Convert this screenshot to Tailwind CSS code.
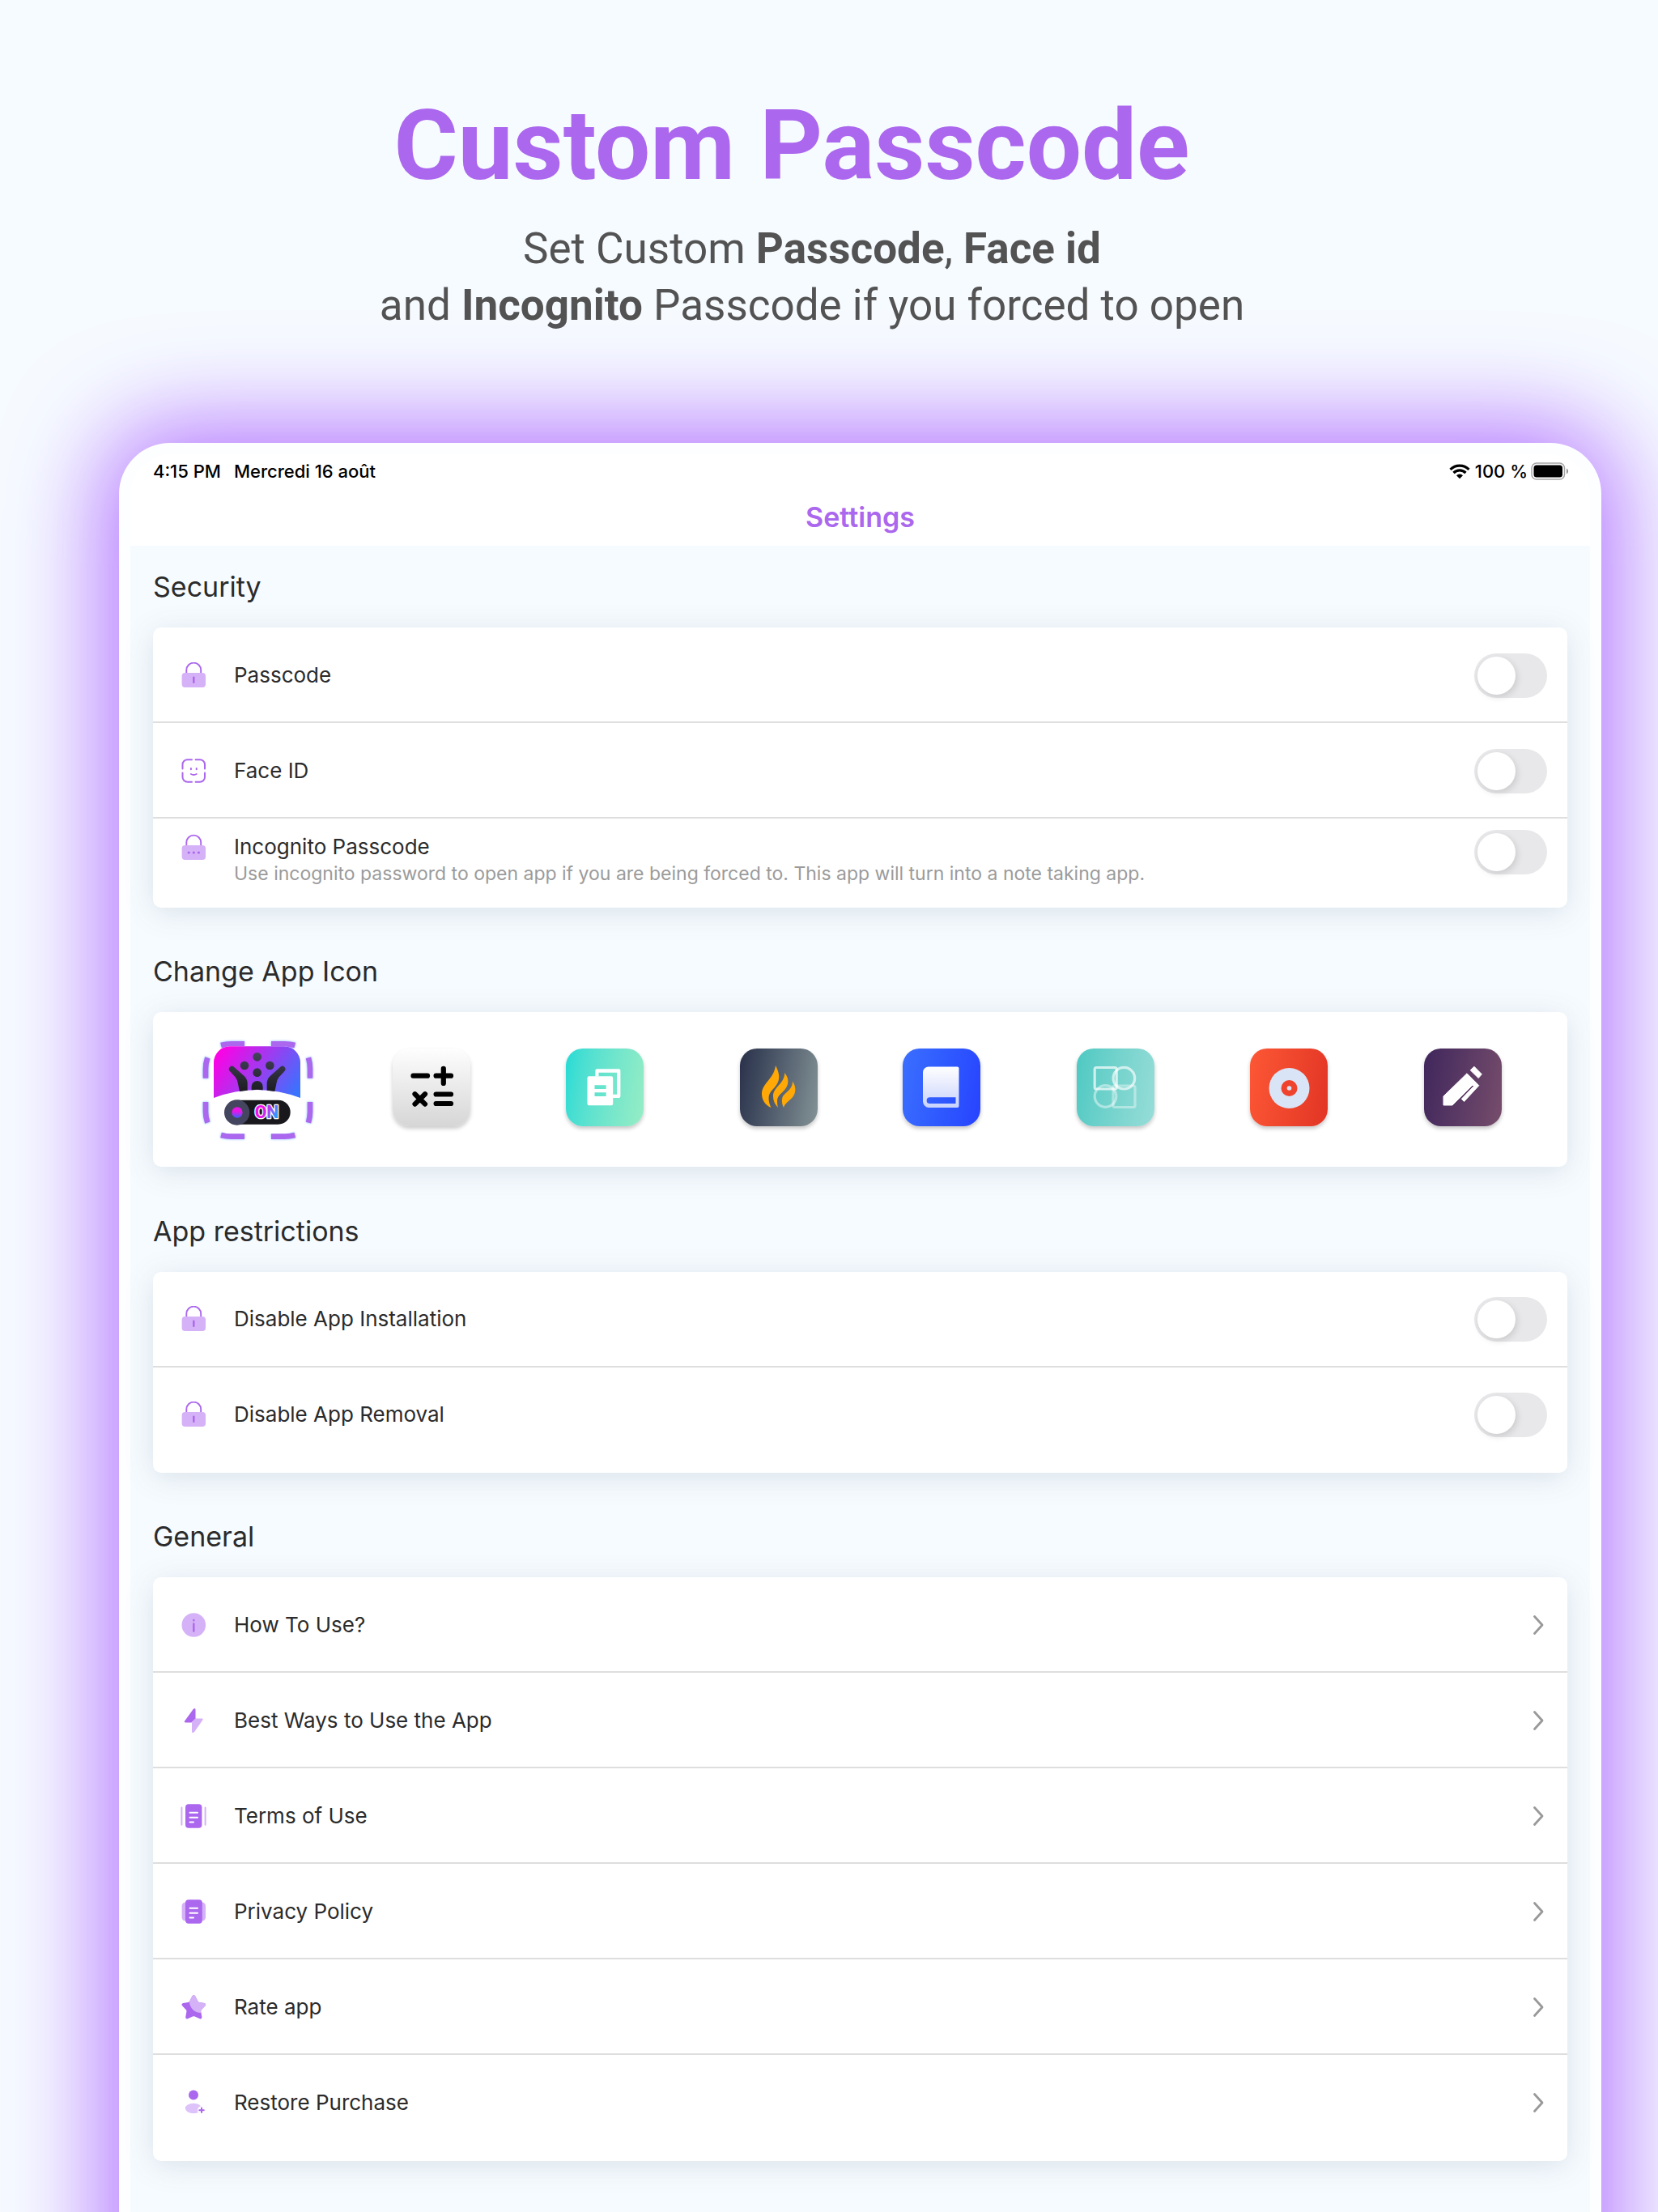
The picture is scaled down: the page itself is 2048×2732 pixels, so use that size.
<!DOCTYPE html>
<html lang="en">
<head>
<meta charset="utf-8">
<meta name="viewport" content="width=device-width, initial-scale=1">
<title>Custom Passcode</title>
<script src="https://cdn.jsdelivr.net/npm/@tailwindcss/browser@4"></script>
</head>
<body class="bg-[#f6fbff] font-['Inter',sans-serif] text-[#2b2b2b]">

<!-- Shared symbols -->
<svg class="hidden" aria-hidden="true">
  <symbol id="lock" viewBox="0 0 32 32">
    <path d="M7.3 14V9.6a8.9 8.9 0 0 1 17.9 0V14" fill="none" stroke="#ab67ee" stroke-width="1.9"/>
    <rect x="1.6" y="13" width="29.4" height="18" rx="4" fill="#d5b2f7"/>
    <path d="M16.3 18.6v6.2" stroke="#ab67ee" stroke-width="2.4" stroke-linecap="round"/>
  </symbol>
  <symbol id="chevron" viewBox="0 0 14 26">
    <path d="M2.5 2.5 L12 13 L2.5 23.5" fill="none" stroke="#999" stroke-width="2.8" stroke-linecap="round" stroke-linejoin="round"/>
  </symbol>
</svg>

<div class="flex min-h-screen flex-col overflow-hidden">

  <header class="pt-[108px] pb-[135px] text-center font-['Roboto',sans-serif]">
    <h1 class="pr-[92px] text-[121px] leading-[144px] font-bold text-[#ab67ee]">Custom Passcode</h1>
    <p class="mt-5 pr-[42px] text-[53px] leading-[70px] text-[#535353]">Set Custom <b>Passcode</b>, <b>Face id</b><br>and <b>Incognito</b> Passcode if you forced to open</p>
  </header>

  <div class="-mb-[200px] ml-[147px] mr-[70px] flex-1 rounded-t-[63px] bg-[#fcfeff] px-[14px] pt-[14px] shadow-[0_0_120px_20px_#b372ff]">
    <div class="h-full rounded-t-[50px] bg-white">

      <div class="flex h-[42px] items-center px-7 text-[22px] font-medium text-black">
        <span>4:15 PM</span>
        <span class="ml-4">Mercredi 16 août</span>
        <svg class="ml-auto h-[19px] w-[26px]" viewBox="0 0 26 19" fill="none" stroke="#000" stroke-width="3.2" aria-hidden="true">
          <path d="M1.5 6.8 A16.4 16.4 0 0 1 24.5 6.8"/>
          <path d="M5.5 11 A10.6 10.6 0 0 1 20.5 11"/>
          <path d="M13 18.2 L9 14.2 A5.7 5.7 0 0 1 17 14.2 Z" fill="#000" stroke="none"/>
        </svg>
        <span class="ml-1.5">100 %</span>
        <svg class="ml-1 h-[22px] w-[45px] overflow-visible" viewBox="0 0 45 22" aria-hidden="true">
          <rect x="1" y="1" width="40.5" height="20" rx="6" fill="none" stroke="#a5a5a5" stroke-width="1.5"/>
          <rect x="3.5" y="3.5" width="35.5" height="15" rx="3.5" fill="#000"/>
          <path d="M44 7.5 a4 4 0 0 1 0 7z" fill="#8f8f8f"/>
        </svg>
      </div>
      <h2 class="h-[71px] text-center text-[34px] leading-[72px] font-semibold text-[#ab67ee]">Settings</h2>

      <main class="bg-[#f6fbff] px-7 pt-[27px] pb-[263px]">

        <!-- Security -->
        <h3 class="text-[34px] leading-[48px]">Security</h3>
        <section class="mt-[26px] rounded-[10px] bg-white shadow-[0_6px_36px_rgba(70,95,105,0.15)]">
          <div class="flex h-[118px] items-center border-b-2 border-[#dedede] pt-0.5 pr-[25px] pl-[34px]">
            <svg class="size-8"><use href="#lock"/></svg>
            <label for="passcode" class="ml-[34px] flex-1 text-[26px] leading-[34px]">Passcode</label>
            <input id="passcode" type="checkbox" role="switch" class="h-[55px] w-[90px] appearance-none rounded-full bg-[#e8e8ea] p-1 before:block before:size-[47px] before:rounded-full before:bg-white before:shadow-[2px_3px_8px_rgba(0,0,0,0.13)]">
          </div>
          <div class="flex h-[118px] items-center border-b-2 border-[#dedede] pt-0.5 pr-[25px] pl-[34px]">
            <svg class="size-8" viewBox="0 0 32 32" fill="none" stroke="#ab67ee" stroke-width="2" stroke-linecap="round" aria-hidden="true">
              <path d="M14 2.3H8.5a6 6 0 0 0-6 6V13.5M18.6 2.3H24a6 6 0 0 1 6 6V13.5M14 29.7H8.5a6 6 0 0 1-6-6V18.5M18.6 29.7H24a6 6 0 0 0 6-6V18.5"/>
              <path d="M12.9 13v1.2M19.7 13v1.2M12.9 20q3.4 2 6.8 0"/>
            </svg>
            <label for="faceid" class="ml-[34px] flex-1 text-[26px] leading-[34px]">Face ID</label>
            <input id="faceid" type="checkbox" role="switch" class="h-[55px] w-[90px] appearance-none rounded-full bg-[#e8e8ea] p-1 before:block before:size-[47px] before:rounded-full before:bg-white before:shadow-[2px_3px_8px_rgba(0,0,0,0.13)]">
          </div>
          <div class="flex h-[110px] items-start pt-[14px] pr-[25px] pl-[34px]">
            <svg class="mt-1 h-9 w-8" viewBox="0 0 32 32" aria-hidden="true">
              <path d="M7.3 14V9.6a8.9 8.9 0 0 1 17.9 0V14" fill="none" stroke="#ab67ee" stroke-width="1.9"/>
              <rect x="1.6" y="13" width="29.4" height="18" rx="4" fill="#d5b2f7"/>
              <path d="M10.2 22h.01M16.3 22h.01M22.4 22h.01" stroke="#ab67ee" stroke-width="3.2" stroke-linecap="round"/>
            </svg>
            <div class="mt-1 ml-[34px] flex-1">
              <label for="incognito" class="block text-[26px] leading-[34px]">Incognito Passcode</label>
              <p class="text-[23px] leading-[32px] text-[#9b9b9b]">Use incognito password to open app if you are being forced to. This app will turn into a note taking app.</p>
            </div>
            <input id="incognito" type="checkbox" role="switch" class="h-[55px] w-[90px] appearance-none rounded-full bg-[#e8e8ea] p-1 before:block before:size-[47px] before:rounded-full before:bg-white before:shadow-[2px_3px_8px_rgba(0,0,0,0.13)]">
          </div>
        </section>

        <!-- App icon picker -->
        <h3 class="mt-[55px] text-[34px] leading-[48px]">Change App Icon</h3>
        <section class="mt-[26px] flex h-[191px] gap-[105px] rounded-[10px] bg-white px-[81px] pt-[45px] shadow-[0_6px_36px_rgba(70,95,105,0.15)]">
          <div class="flex flex-1 justify-between">
            <button type="button" aria-label="Default icon" aria-pressed="true" class="size-24">
              <svg class="size-24 overflow-visible" viewBox="0 0 96 96">
                <defs>
                  <linearGradient id="g1" gradientUnits="userSpaceOnUse" x1="150" y1="110" x2="430" y2="300"><stop stop-color="#ff00e4"/><stop offset=".5" stop-color="#9d3cf0"/><stop offset="1" stop-color="#3376ff"/></linearGradient>
                  <linearGradient id="g1d" gradientUnits="userSpaceOnUse" x1="0" y1="120" x2="0" y2="262"><stop stop-color="#43435c"/><stop offset="1" stop-color="#1d1d22"/></linearGradient>
                  <linearGradient id="g1k" x1="0" y1="0" x2="0" y2="1"><stop offset=".4" stop-color="#e815e8"/><stop offset="1" stop-color="#3c60ff"/></linearGradient>
                  <linearGradient id="g1t" x1="0" y1="0" x2="1" y2=".4"><stop offset=".45" stop-color="#f010e8"/><stop offset="1" stop-color="#2a9bff"/></linearGradient>
                </defs>
                <g transform="translate(-50 -35) scale(.33333)">
                  <g class="drop-shadow-[0_0_4px_#7db8ff]" fill="none" stroke="#ab67ee" stroke-width="20">
                    <path d="M159 93Q178 88 198 88H246M345 88H394Q414 88 433 93M159 426Q178 431 198 431H246M345 431H394Q414 431 433 426"/>
                    <path d="M109 139Q102 160 102 180V215M102 303V340Q102 360 109 380M483 139Q489 160 489 180V215M489 303V340Q489 360 483 380"/>
                  </g>
                  <path d="M132 288V157a60 60 0 0 1 60-60H393a60 60 0 0 1 60 60V360a60 60 0 0 1-60 60H192a60 60 0 0 1-60-60z" fill="#fff"/>
                  <path d="M132 288V157a60 60 0 0 1 60-60H393a60 60 0 0 1 60 60V288Q293 228 132 288z" fill="url(#g1)"/>
                  <g fill="url(#g1d)">
                    <path d="M277 136a16 16 0 1 0 32 0a16 16 0 1 0-32 0M230 168a16 16 0 1 0 32 0a16 16 0 1 0-32 0M324 168a16 16 0 1 0 32 0a16 16 0 1 0-32 0M277 194a16 16 0 1 0 32 0a16 16 0 1 0-32 0M272 259V246a21 21 0 0 1 42 0V259Q293 256 272 259zM191 188a11 11 0 0 1 16-15L245 207Q257 218 257 235V260L228 264L221 232Q219 220 212 211zM395 188a11 11 0 0 0-16-15L341 207Q329 218 329 235V260L358 264L365 232Q367 220 374 211z"/>
                  </g>
                  <rect x="180" y="296" width="236" height="90" rx="45" fill="#19191d"/>
                  <circle cx="218" cy="342" r="47" fill="#44455e"/>
                  <circle cx="219" cy="342" r="20" fill="url(#g1k)"/>
                  <text x="284" y="364" font-family="Roboto, sans-serif" font-weight="800" font-size="64" fill="url(#g1t)" stroke="#fff" stroke-width="8" stroke-linejoin="round" paint-order="stroke">ON</text>
                </g>
              </svg>
            </button>
            <button type="button" aria-label="Calculator icon" class="size-24 rounded-[21px] bg-linear-to-b from-[#fefefe] to-[#d6d6d6] shadow-[0_3px_5px_rgba(0,0,0,0.2)]">
              <svg class="size-24" viewBox="0 0 96 96" fill="none" stroke="#000" stroke-width="6.2" stroke-linecap="round">
                <path d="M25.5 33.7H43M53.6 33.7H72M62.8 24.8V43M53.6 56.5H72M53.6 68H72M27.5 56.2L40 68.6M40 56.2L27.5 68.6"/>
              </svg>
            </button>
            <button type="button" aria-label="Documents icon" class="size-24 rounded-[21px] bg-linear-100 from-[#1fdbd5] to-[#96edc4] shadow-[0_3px_5px_rgba(0,0,0,0.22)]">
              <svg class="size-24" viewBox="0 0 96 96" fill="#fff" fill-rule="evenodd">
                <path d="M36.4 34.5V27.3a2 2 0 0 1 2-2H65.4a2 2 0 0 1 2 2V59a2 2 0 0 1-2 2H57V56.7H63V29.7H40.5V34.5z"/>
                <path d="M28.5 34.3H56.2a2 2 0 0 1 2 2V68.3a2 2 0 0 1-2 2H28.5a2 2 0 0 1-2-2V36.3a2 2 0 0 1 2-2zM35.5 45.3V50H49.7V45.3zM35.5 54.3V59H49.7V54.3z"/>
              </svg>
            </button>
            <button type="button" aria-label="Flame icon" class="size-24 rounded-[21px] bg-linear-100 from-[#29314a] to-[#849396] shadow-[0_3px_5px_rgba(0,0,0,0.22)]">
              <svg class="size-24" viewBox="0 0 96 96" fill="#ffa806">
                <path d="M44 21C47 27 49.500 33 47.5 40C45 49 35.5 52 35.5 61C35.5 66 37 70 38.5 73C31 70 27 63 27 56C27 43 42 38 44 21z"/>
                <path d="M55.3 30C58 34 60.5 38 59 44C57 53 46.5 56 46 64C46 68 46.3 70 47 73C43 69 41 64 41 59C41 47 55 44 55.3 30z"/>
                <path d="M65 40.5C68 45 69.8 51 67 57C63.5 64 56 66 54 73C52 69 51.3 65 52.3 61C54.5 54 65 52 65 40.5z"/>
              </svg>
            </button>
          </div>
          <div class="flex flex-1 justify-between">
            <button type="button" aria-label="Book icon" class="size-24 rounded-[21px] bg-linear-100 from-[#3b6eff] to-[#2842ff] shadow-[0_3px_5px_rgba(0,0,0,0.22)]">
              <svg class="size-24" viewBox="0 0 96 96">
                <defs><linearGradient id="g5" x1="0" y1="0" x2="0" y2="1"><stop stop-color="#fff"/><stop offset="1" stop-color="#c8d2fb"/></linearGradient></defs>
                <path fill="url(#g5)" fill-rule="evenodd" d="M32 22.5H67.5a2 2 0 0 1 2 2V71a2 2 0 0 1-2 2H32.5a7.5 7.5 0 0 1-7.5-7.5V29.5a7 7 0 0 1 7-7zM33.5 60.3a3.8 3.8 0 0 0 0 7.7H65.5V60.3z"/>
              </svg>
            </button>
            <button type="button" aria-label="Shapes icon" class="size-24 rounded-[21px] bg-linear-100 from-[#4cc9c2] to-[#97ddd8] shadow-[0_3px_5px_rgba(0,0,0,0.22)]">
              <svg class="size-24" viewBox="0 0 96 96" fill="none" stroke="#fff" stroke-width="3.2">
                <rect x="22.2" y="23.5" width="27" height="26.5" rx="2" stroke-opacity=".7"/>
                <circle cx="58.4" cy="36.7" r="13.3" stroke-opacity=".65"/>
                <circle cx="35.5" cy="59" r="13.3" stroke-opacity=".45"/>
                <rect x="45" y="46" width="27" height="26.5" rx="2" stroke-opacity=".4"/>
              </svg>
            </button>
            <button type="button" aria-label="Disc icon" class="size-24 rounded-[21px] bg-linear-100 from-[#fc5735] to-[#e23425] shadow-[0_3px_5px_rgba(0,0,0,0.22)]">
              <svg class="size-24" viewBox="0 0 96 96">
                <circle cx="48.5" cy="49" r="25" fill="#d9e4f6"/><circle cx="48.5" cy="49" r="10" fill="#f0432d"/><circle cx="48.5" cy="49" r="2.8" fill="#d9e4f6"/>
              </svg>
            </button>
            <button type="button" aria-label="Pen icon" class="size-24 rounded-[21px] bg-linear-100 from-[#40265c] to-[#774d6b] shadow-[0_3px_5px_rgba(0,0,0,0.22)]">
              <svg class="size-24" viewBox="0 0 96 96" fill="#fff" stroke="#fff" stroke-linejoin="round">
                <path d="M53 30.8L67.8 45.7L49.5 65.5L46.3 62.3L61.5 46.5L60 45L35 70H24V59z"/>
                <path d="M62 22.3L71.3 31.8L67.2 36.5L57.2 26.8z"/>
              </svg>
            </button>
          </div>
        </section>

        <!-- App restrictions -->
        <h3 class="mt-[56px] text-[34px] leading-[48px]">App restrictions</h3>
        <section class="mt-[26px] rounded-[10px] bg-white pb-3 shadow-[0_6px_36px_rgba(70,95,105,0.15)]">
          <div class="flex h-[118px] items-center border-b-2 border-[#dedede] pr-[25px] pl-[34px]">
            <svg class="size-8"><use href="#lock"/></svg>
            <label for="install" class="ml-[34px] flex-1 text-[26px] leading-[34px]">Disable App Installation</label>
            <input id="install" type="checkbox" role="switch" class="h-[55px] w-[90px] appearance-none rounded-full bg-[#e8e8ea] p-1 before:block before:size-[47px] before:rounded-full before:bg-white before:shadow-[2px_3px_8px_rgba(0,0,0,0.13)]">
          </div>
          <div class="flex h-[118px] items-center pr-[25px] pb-0.5 pl-[34px]">
            <svg class="size-8"><use href="#lock"/></svg>
            <label for="removal" class="ml-[34px] flex-1 text-[26px] leading-[34px]">Disable App Removal</label>
            <input id="removal" type="checkbox" role="switch" class="h-[55px] w-[90px] appearance-none rounded-full bg-[#e8e8ea] p-1 before:block before:size-[47px] before:rounded-full before:bg-white before:shadow-[2px_3px_8px_rgba(0,0,0,0.13)]">
          </div>
        </section>

        <!-- General -->
        <h3 class="mt-[55px] text-[34px] leading-[48px]">General</h3>
        <nav class="mt-[26px] rounded-[10px] bg-white pb-[13px] shadow-[0_6px_36px_rgba(70,95,105,0.15)]">
          <a href="#how-to-use" class="flex h-[118px] items-center border-b-2 border-[#dedede] pt-0.5 pr-[29px] pl-[34px]">
            <svg class="size-8" viewBox="0 0 32 32"><circle cx="16.3" cy="16" r="14.8" fill="#d5b2f7"/><path d="M16.3 14.5V23.5M16.3 10v.2" stroke="#ab67ee" stroke-width="2.4" stroke-linecap="round"/></svg>
            <span class="ml-[34px] flex-1 text-[26px] leading-[34px]">How To Use?</span>
            <svg class="h-[26px] w-[14px]"><use href="#chevron"/></svg>
          </a>
          <a href="#best-ways" class="flex h-[118px] items-center border-b-2 border-[#dedede] pt-0.5 pr-[29px] pl-[34px]">
            <svg class="size-8" viewBox="0 0 32 32"><path d="M14 18.5L18.5 13.5H26.5Q28.3 13.8 27.4 15.3L17.2 30Q14 32.5 14 29.5z" fill="#d5b2f7"/><path d="M18.5 13.5L13.5 18.5H6Q4 18.2 5 16.7L15.5 2.2Q18.5 -.3 18.5 2.8z" fill="#ab67ee"/></svg>
            <span class="ml-[34px] flex-1 text-[26px] leading-[34px]">Best Ways to Use the App</span>
            <svg class="h-[26px] w-[14px]"><use href="#chevron"/></svg>
          </a>
          <a href="#terms" class="flex h-[118px] items-center border-b-2 border-[#dedede] pt-0.5 pr-[29px] pl-[34px]">
            <svg class="size-8" viewBox="0 0 32 32"><rect x="6" y="1.3" width="20.4" height="29.4" rx="4" fill="#ab67ee"/><path d="M1.4 5.5V26.8M30.6 5.5V26.8" stroke="#d5b2f7" stroke-width="2" stroke-linecap="round"/><path d="M11.5 11.8H21M11.5 17.7H21M11.5 23.5H16" stroke="#fff" stroke-width="2" stroke-linecap="round"/></svg>
            <span class="ml-[34px] flex-1 text-[26px] leading-[34px]">Terms of Use</span>
            <svg class="h-[26px] w-[14px]"><use href="#chevron"/></svg>
          </a>
          <a href="#privacy" class="flex h-[118px] items-center border-b-2 border-[#dedede] pt-0.5 pr-[29px] pl-[34px]">
            <svg class="size-8" viewBox="0 0 32 32"><rect x="1.6" y="4.5" width="29.4" height="23" rx="4.5" fill="#d5b2f7"/><rect x="6" y="1.3" width="20.8" height="29.4" rx="4" fill="#ab67ee"/><path d="M11.5 11.8H21M11.5 17.7H21M11.5 23.5H16" stroke="#fff" stroke-width="2" stroke-linecap="round"/></svg>
            <span class="ml-[34px] flex-1 text-[26px] leading-[34px]">Privacy Policy</span>
            <svg class="h-[26px] w-[14px]"><use href="#chevron"/></svg>
          </a>
          <a href="#rate" class="flex h-[118px] items-center border-b-2 border-[#dedede] pt-0.5 pr-[29px] pl-[34px]">
            <svg class="size-8" viewBox="0 0 32 32">
              <defs><clipPath id="star"><path d="M14.3 2.6Q16.3 -.4 18.3 2.6L21.3 8.5Q21.8 9.6 23 9.9L29.4 11Q32.2 12 30.5 14.2L25.8 19.3Q25 20.3 25.2 21.5L26.4 28.3Q26.3 31.3 23.6 30.3L17.6 27.6Q16.3 27 15 27.6L9 30.3Q6.3 31.3 6.2 28.3L7.4 21.5Q7.6 20.3 6.8 19.3L2.1 14.2Q.4 12 3.2 11L9.6 9.9Q10.8 9.6 11.3 8.5z"/></clipPath></defs>
              <g clip-path="url(#star)"><path d="M0 0H32V32H0z" fill="#ab67ee"/><circle cx="25" cy="9" r="14" fill="#d5b2f7"/></g>
            </svg>
            <span class="ml-[34px] flex-1 text-[26px] leading-[34px]">Rate app</span>
            <svg class="h-[26px] w-[14px]"><use href="#chevron"/></svg>
          </a>
          <a href="#restore" class="flex h-[118px] items-center pr-[29px] pl-[34px]">
            <svg class="size-8" viewBox="0 0 32 32"><circle cx="16" cy="6.6" r="6" fill="#ab67ee"/><ellipse cx="16" cy="23" rx="10.2" ry="6.2" fill="#ddc3fa"/><circle cx="26" cy="25.2" r="5" fill="#fff"/><path d="M26 22.4V28M23.2 25.2H28.8" stroke="#ab67ee" stroke-width="2" stroke-linecap="round"/></svg>
            <span class="ml-[34px] flex-1 text-[26px] leading-[34px]">Restore Purchase</span>
            <svg class="h-[26px] w-[14px]"><use href="#chevron"/></svg>
          </a>
        </nav>
      </main>
    </div>
  </div>
</div>
</body>
</html>
